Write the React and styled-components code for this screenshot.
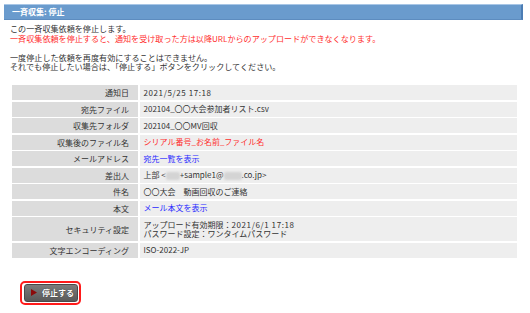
import React from "react";
import styled, { createGlobalStyle } from "styled-components";

const GlobalStyle = createGlobalStyle`
  body {
    margin: 0;
    background: #fff;
    font-family: "Noto Sans CJK JP", "Liberation Sans", sans-serif;
    font-size: 8px;
    color: #333;
  }
`;

const Page = styled.div`
  width: 519px;
  padding: 4px 0 0 4px;
`;

const TitleBar = styled.div`
  height: 14px;
  line-height: 14px;
  padding-left: 8px;
  background: #6a9bcd;
  border-top: 1px solid #a8c6e6;
  border-bottom: 1px solid #5d8cbf;
  border-right: 2px solid #4c7db4;
  color: #fff;
  font-weight: bold;
`;

const Notice = styled.div`
  margin: 4px 0 0 6px;
  line-height: 9.8px;
  font-size: 8.1px;
`;

const Line = styled.div`
  color: ${(p) => (p.$warn ? "#ff2e2e" : "#333")};
  margin-top: ${(p) => (p.$gap ? "9px" : "0")};
`;

const Table = styled.div`
  display: grid;
  grid-template-columns: 126px 1fr;
  column-gap: 1.5px;
  row-gap: 1.5px;
  margin: 13px 6px 0 8px;
`;

const Label = styled.div`
  background: #dcdcdc;
  text-align: right;
  padding-right: 9px;
  display: flex;
  align-items: center;
  justify-content: flex-end;
  height: ${(p) => (p.$tall ? "24px" : "15px")};
`;

const Value = styled.div`
  background: #eeeeee;
  padding-left: 4px;
  display: flex;
  flex-direction: column;
  justify-content: center;
  line-height: 9.5px;
  color: ${(p) => (p.$tone === "red" ? "#ff2e2e" : p.$tone === "blue" ? "#2a2aff" : "#333")};
  height: ${(p) => (p.$tall ? "24px" : "15px")};
`;

const Num = styled.span`
  letter-spacing: 0.6px;
`;

const Masked = styled.span`
  display: inline-block;
  width: ${(p) => p.$w}px;
  height: 8px;
  vertical-align: middle;
  background: #d4d4d4;
  filter: blur(1px);
  border-radius: 2px;
`;

const Footer = styled.div`
  margin: 23px 0 0 16px;
`;

const Outline = styled.div`
  display: inline-block;
  border: 2px solid #ff1a1a;
  border-radius: 5px;
  padding: 1px 1px 1px 2px;
`;

const StopButton = styled.button`
  display: flex;
  align-items: center;
  gap: 5px;
  width: 54px;
  height: 18px;
  padding: 0 0 0 6px;
  border: 1px solid #4a4a4a;
  border-radius: 3px;
  background: linear-gradient(#7c7c7c, #5a5a5a);
  color: #fff;
  font-family: inherit;
  font-size: 8px;
  font-weight: bold;
  text-shadow: 0 0 1px #222;
`;

const rows = [
  { label: "通知日", value: <Num>2021/5/25 17:18</Num> },
  { label: "宛先ファイル", value: <span>202104_〇〇大会参加者リスト.csv</span> },
  { label: "収集先フォルダ", value: <span>202104_〇〇MV回収</span> },
  { label: "収集後のファイル名", value: <span>シリアル番号_お名前_ファイル名</span>, tone: "red" },
  { label: "メールアドレス", value: <span>宛先一覧を表示</span>, tone: "blue" },
  {
    label: "差出人",
    value: (
      <span>
        上部 &lt;<Masked $w={14} />+sample1@<Masked $w={18} />.co.jp&gt;
      </span>
    ),
  },
  { label: "件名", value: <span>〇〇大会　動画回収のご連絡</span> },
  { label: "本文", value: <span>メール本文を表示</span>, tone: "blue" },
  {
    label: "セキュリティ設定",
    tall: true,
    value: (
      <>
        <span>アップロード有効期限：<Num>2021/6/1 17:18</Num></span>
        <span>パスワード設定：ワンタイムパスワード</span>
      </>
    ),
  },
  { label: "文字エンコーディング", value: <span>ISO-2022-JP</span> },
];

export default function App() {
  return (
    <Page>
      <GlobalStyle />
      <TitleBar>一斉収集: 停止</TitleBar>
      <Notice>
        <Line>この一斉収集依頼を停止します。</Line>
        <Line $warn>一斉収集依頼を停止すると、通知を受け取った方は以降URLからのアップロードができなくなります。</Line>
        <Line $gap>一度停止した依頼を再度有効にすることはできません。</Line>
        <Line>それでも停止したい場合は、「停止する」ボタンをクリックしてください。</Line>
      </Notice>
      <Table>
        {rows.map((r) => (
          <React.Fragment key={r.label}>
            <Label $tall={r.tall}>{r.label}</Label>
            <Value $tall={r.tall} $tone={r.tone}>{r.value}</Value>
          </React.Fragment>
        ))}
      </Table>
      <Footer>
        <Outline>
          <StopButton>
            <svg width="6" height="7" viewBox="0 0 6 7">
              <path d="M0 0 L6 3.5 L0 7 Z" fill="#8b0a0a" />
            </svg>
            停止する
          </StopButton>
        </Outline>
      </Footer>
    </Page>
  );
}
